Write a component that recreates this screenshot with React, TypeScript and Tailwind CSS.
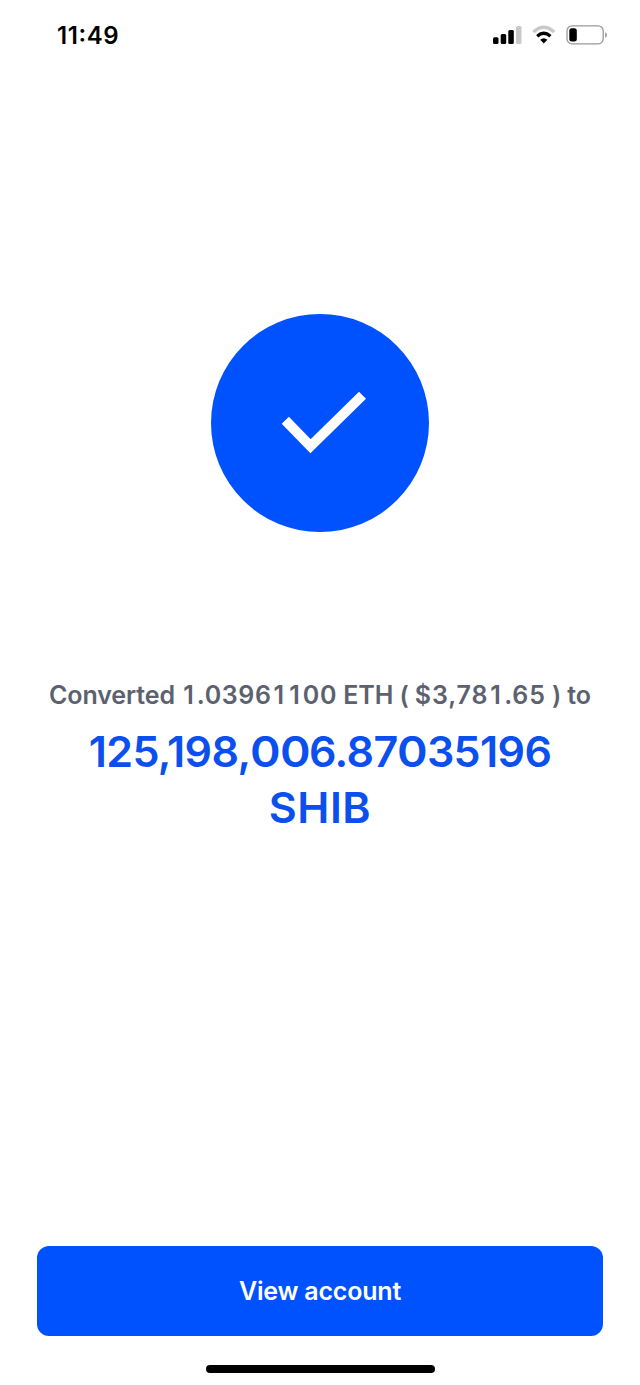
import { Fragment } from 'react';

function SpacedOnes({ text }: { text: string }) {
  return (
    <>
      {text.split('').map((char, index) =>
        char === '1' ? <span key={index} className="ml-[2px] mr-[2.5px]">1</span> : <Fragment key={index}>{char}</Fragment>
      )}
    </>
  );
}

function RoundZeros({ text }: { text: string }) {
  return (
    <>
      {text.split('').map((char, index) =>
        char === '0' ? <span key={index} className="mx-[0.8px] inline-block scale-x-[1.08]">0</span> : <Fragment key={index}>{char}</Fragment>
      )}
    </>
  );
}

export default function App() {
  return (
    <main className="flex h-[1385px] w-[640px] flex-col items-center overflow-hidden bg-white font-['Inter',sans-serif]">
      <header className="flex h-[70px] w-full items-center justify-between pr-[32px] pl-[57px]">
        <time className="pt-[1px] text-[24px] leading-7 font-semibold tracking-[0.6px] text-black [font-feature-settings:'case']">11:49</time>
        <svg width="116" height="22" viewBox="492 24 116 22" fill="none">
          <rect x="493" y="37.200" width="5.500" height="6.800" rx="1.500" fill="#000" />
          <rect x="500.700" y="34" width="5.500" height="10" rx="1.500" fill="#000" />
          <rect x="508.300" y="30" width="5.500" height="14" rx="1.500" fill="#000" />
          <rect x="516" y="26" width="5.500" height="18" rx="1.500" fill="#c9c9c9" />
          <path d="M533.400 32Q543.800 22.500 554.200 32" stroke="#c9c9c9" strokeWidth="3.300" />
          <path d="M537.200 36.200Q543.800 30.400 550.400 36.200" stroke="#000" strokeWidth="3.300" />
          <path d="M540.200 39.800Q543.800 36.500 547.400 39.800L543.800 43.600Z" fill="#000" />
          <rect x="567" y="25.800" width="36.200" height="18" rx="5" stroke="#999" strokeWidth="1.300" />
          <rect x="569.300" y="28.200" width="7.500" height="13.200" rx="2.500" fill="#000" />
          <path d="M605.200 32.300Q607 33 607 35T605.200 37.700Z" fill="#999" />
        </svg>
      </header>
      <svg className="mt-[244px] shrink-0" width="218" height="218" viewBox="0 0 218 218" fill="none">
        <circle cx="109" cy="109" r="109" fill="#0052ff" />
        <path d="M74.300 106.200L99.500 132.200L151.500 81.300" stroke="#fff" strokeWidth="10" />
      </svg>
      <p className="mt-[145px] text-[25px] leading-9 font-semibold tracking-[-0.1px] whitespace-nowrap text-[#5b616e]">
        Converted <span className="tracking-[0.6px]"><SpacedOnes text="1.03961100" /></span> ETH ( <span className="tracking-[0.85px]"><SpacedOnes text="$3,781.65" /></span> ) to
      </p>
      <h1 className="mt-[10px] text-center text-[43px] leading-[56px] font-semibold tracking-[-0.65px] text-[#0b50ee]">
        <RoundZeros text="125,198,006.87035196" /><br /><span className="tracking-[0.5px]">SHIB</span>
      </h1>
      <button className="mt-auto h-[90px] w-[566px] shrink-0 rounded-[12px] bg-[#0052ff] pt-[1px] text-[25px] font-semibold tracking-[-0.2px] text-white">View account</button>
      <div className="mt-[29px] mb-[12px] h-[8px] w-[229px] shrink-0 rounded-full bg-black" />
    </main>
  );
}
